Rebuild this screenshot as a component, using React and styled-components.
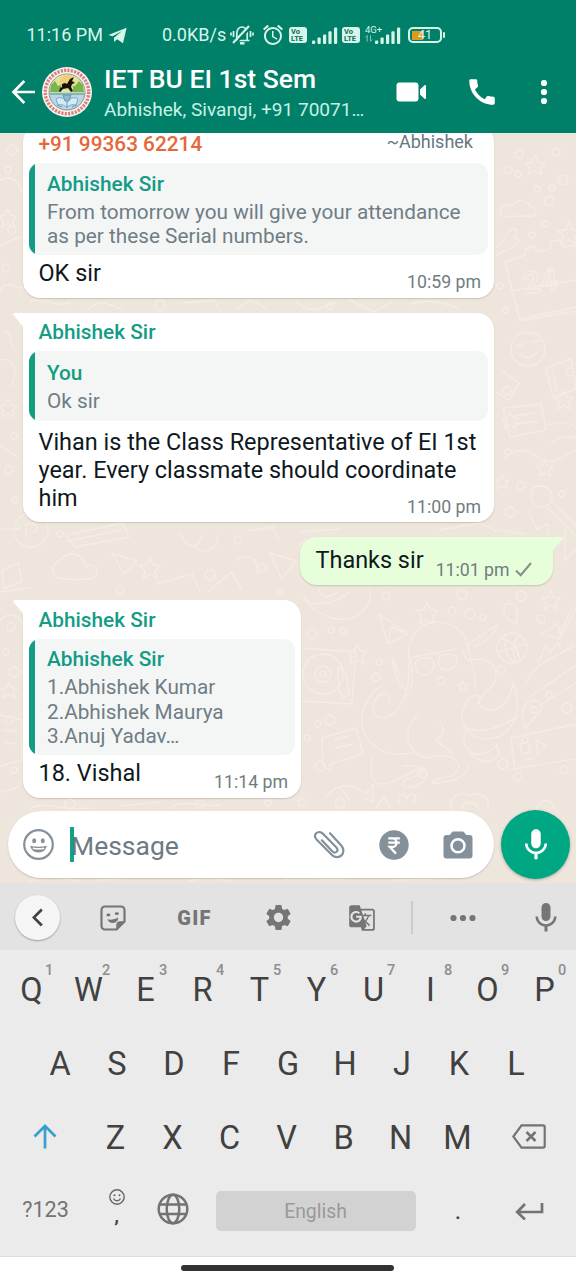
import React from 'react';
import styled, { createGlobalStyle } from 'styled-components';
import { MdAlarm, MdCall, MdGTranslate, MdMic, MdSettings } from 'react-icons/md';

const GlobalStyle = createGlobalStyle`
  * { box-sizing: border-box; }
  html, body { margin: 0; padding: 0; }
  body { font-family: Roboto, "Noto Sans", sans-serif; }
  svg { display: block; flex: none; }
`;

const Screen = styled.div`
  width: 576px;
  height: 1280px;
  display: flex;
  flex-direction: column;
  overflow: hidden;
  background: #fff;
`;

/* ---------- header ---------- */

const Header = styled.header`
  height: 133px;
  flex: none;
  background: #018069;
  color: #fff;
`;

const StatusBar = styled.div`
  height: 59px;
  padding: 11px 0 0 26.5px;
  display: flex;
  align-items: center;
  color: #d8f5ea;
`;

const StatusText = styled.span`
  width: ${(p) => p.$width}px;
  margin-left: ${(p) => p.$gap || 0}px;
  font-size: 18px;
  line-height: 24px;
  white-space: nowrap;
`;

const StatusSlot = styled.span`
  margin-left: ${(p) => p.$gap}px;
  display: flex;
`;

const VolteBadge = styled.span`
  width: 18px;
  height: 16px;
  margin-left: ${(p) => p.$gap}px;
  padding-left: 2px;
  border-radius: 3px;
  background: #d8f5ea;
  color: #05705c;
  display: flex;
  flex-direction: column;
  justify-content: center;
  font-size: 7.5px;
  font-weight: 700;
  line-height: 7px;
`;

const NetworkLabel = styled.span`
  width: 20px;
  height: 20px;
  margin: -2px -10px 0 5px;
  font-size: 9.5px;
  line-height: 11px;
`;

const Battery = styled.span`
  width: 34px;
  height: 16px;
  margin-left: 7px;
  padding: 1.5px 0;
  border: 2px solid #d8f5ea;
  border-radius: 5px;
  font-size: 12.5px;
  line-height: 12px;
  background: linear-gradient(90deg, transparent 2px, #dd9a1c 2px 13px, transparent 13px) content-box;
  display: flex;
  align-items: center;
  justify-content: center;
`;

const BatteryTip = styled.span`
  width: 2px;
  height: 6px;
  margin-left: 1px;
  border-radius: 1px;
  background: #d8f5ea;
`;

const AppBar = styled.div`
  height: 74px;
  padding: 0 27px 9px 11px;
  display: flex;
  align-items: center;
`;

const TitleBlock = styled.div`
  width: 280px;
  margin: 0 12px 0 12px;
  padding-top: 5px;
  white-space: nowrap;
`;

const Title = styled.div`
  font-size: 26.5px;
  line-height: 31px;
  font-weight: 500;
`;

const Subtitle = styled.div`
  font-size: 19.1px;
  line-height: 31px;
  color: #c6f2e4;
`;

/* ---------- chat ---------- */

const Chat = styled.main`
  position: relative;
  height: 750px;
  flex: none;
  overflow: hidden;
  background: #eee5dc;
  isolation: isolate;
`;

const WallpaperLayer = styled.div`
  position: absolute;
  inset: 0;
  z-index: -1;
`;

const Thread = styled.div`
  height: 678px;
  margin-top: -8.5px;
  padding: 0 23px;
  display: flex;
  flex-direction: column;
  align-items: flex-start;
`;

const Bubble = styled.article`
  position: relative;
  flex: none;
  width: ${(p) => p.$width}px;
  height: ${(p) => p.$height}px;
  margin-bottom: 15px;
  padding: 9.5px 6px 0;
  display: flex;
  flex-direction: column;
  background: #fff;
  border-radius: ${(p) => (p.$tail ? '0 17px 17px 17px' : '17px')};
  box-shadow: 0 1px 1.5px rgba(90, 75, 55, 0.22);
`;

const SentBubble = styled(Bubble)`
  align-self: flex-end;
  flex-direction: row;
  padding: 9px 18px 0 15.5px;
  background: #e6ffda;
  border-radius: 17px 0 17px 17px;
`;

const Tail = styled.svg`
  position: absolute;
  top: 0;
  ${(p) => (p.$side === 'left' ? 'left: -10px;' : 'right: -10px;')}
`;

const NameRow = styled.div`
  height: 29px;
  padding: 0 15px 0 9.5px;
  display: flex;
  justify-content: space-between;
  font-size: 20.8px;
  line-height: 20px;
  font-weight: 500;
  color: ${(p) => p.$color || '#159c85'};
`;

const PushName = styled.span`
  margin-top: -2.5px;
  font-size: 18px;
  font-weight: 400;
  color: #667781;
`;

const Quote = styled.blockquote`
  margin: 0;
  padding: ${(p) => (p.$roomy ? '10px 8px 7px 18px' : '8.5px 8px 6px 18px')};
  border-radius: 11px;
  background: linear-gradient(90deg, ${(p) => p.$accent} 6px, #f4f6f6 6px);
  color: #6f7d85;
  font-size: 20.75px;
  line-height: 24.5px;
`;

const QuoteName = styled.div`
  margin-bottom: 4px;
  font-size: 20.8px;
  line-height: 24px;
  font-weight: 500;
  color: ${(p) => p.$color};
`;

const Line = styled.div`
  white-space: nowrap;
`;

const Body = styled.div`
  margin-top: ${(p) => p.$gap}px;
  padding-left: ${(p) => (p.$flush ? 0 : 9.5)}px;
  font-size: 23.45px;
  line-height: 28px;
  color: #0f181d;
`;

const Time = styled.time`
  align-self: flex-end;
  display: flex;
  align-items: center;
  gap: 5px;
  margin: -14.5px 7px 0 0;
  font-size: 17.7px;
  line-height: 20px;
  color: #6f7d80;
  white-space: nowrap;
`;

const SentTime = styled(Time)`
  margin: 0 0 5.5px 12px;
`;

/* ---------- composer ---------- */

const Composer = styled.div`
  height: 69px;
  margin-top: 7.5px;
  padding: 0 6px 0 8px;
  display: flex;
  align-items: center;
  justify-content: space-between;
`;

const InputPill = styled.div`
  width: 486px;
  height: 67px;
  padding: 0 20px 0 15px;
  border-radius: 34px;
  background: #fff;
  box-shadow: 0 1px 1.5px rgba(90, 75, 55, 0.25);
  display: flex;
  align-items: center;
`;

const Cursor = styled.span`
  width: 4px;
  height: 35px;
  margin: 0 -3px 0 16px;
  background: #14a284;
`;

const Placeholder = styled.span`
  width: 241.5px;
  padding-top: 2px;
  font-size: 26.5px;
  line-height: 34px;
  color: #6d7a81;
`;

const PillIcon = styled.span`
  margin-right: ${(p) => p.$gap || 0}px;
`;

const VoiceButton = styled.button`
  width: 69px;
  height: 69px;
  padding: 0;
  border: 0;
  border-radius: 50%;
  background: #00a783;
  box-shadow: 0 1px 3px rgba(40, 60, 50, 0.35);
  display: grid;
  place-items: center;
`;

/* ---------- keyboard ---------- */

const KeyToolbar = styled.div`
  height: 67px;
  flex: none;
  padding: 2px 12px 0 15px;
  display: grid;
  grid-template-columns: 45px 105px 59px 109px 57px 43px 60px 71px;
  align-items: center;
  justify-items: center;
  background: #e3e3e3;
  color: #757575;
`;

const DictateSlot = styled.span`
  justify-self: end;
`;

const RoundButton = styled.span`
  width: 45px;
  height: 45px;
  border-radius: 50%;
  background: #f5f5f5;
  box-shadow: 0 1px 2px rgba(0, 0, 0, 0.3);
  display: grid;
  place-items: center;
`;

const GifLabel = styled.span`
  font-size: 20px;
  line-height: 24px;
  font-weight: 900;
  letter-spacing: 1.3px;
`;

const Divider = styled.span`
  width: 2px;
  height: 33px;
  background: #cbcbcb;
`;

const Keys = styled.div`
  height: 307px;
  flex: none;
  padding-top: 3.5px;
  background: #ebebeb;
  border-bottom: 1px solid #dedede;
  color: #414141;
`;

const KeyRow = styled.div`
  height: 73.8px;
  padding: 0 ${(p) => p.$inset}px;
  display: grid;
  grid-template-columns: ${(p) => p.$cols};
`;

const Key = styled.span`
  position: relative;
  display: grid;
  place-items: center;
  padding-bottom: ${(p) => p.$lift || 0}px;
  font-size: 32.5px;
  line-height: 38px;
`;

const KeyHint = styled.sup`
  position: absolute;
  top: 8.5px;
  left: 42px;
  font-size: 14.5px;
  line-height: 18px;
  font-weight: 500;
  color: #8d8d8d;
`;

const SymbolsKey = styled(Key)`
  padding-bottom: 3px;
  font-size: 21.6px;
  color: #737373;
`;

const CommaKey = styled(Key)`
  display: flex;
  flex-direction: column;
  align-items: center;
  padding-top: 14px;
`;

const Punct = styled.span`
  margin-top: ${(p) => p.$top || 0}px;
  font-size: 21px;
  line-height: 22px;
  font-weight: 500;
`;

const SpaceKey = styled.span`
  height: 40px;
  margin: 16.5px 0 0;
  border-radius: 5px;
  background: #d2d2d2;
  color: #999;
  font-size: 19.4px;
  line-height: 41px;
  text-align: center;
`;

const NavBar = styled.footer`
  height: 23px;
  flex: none;
  display: flex;
  justify-content: center;
  padding: 8px 1px 0 0;
  background: #fff;
`;

const HomePill = styled.span`
  width: 213px;
  height: 6px;
  border-radius: 3px;
  background: #323232;
`;

/* ---------- drawings ---------- */

const PlaneIcon = () => (
  <svg width="19" height="17" viewBox="0 0 19 17" fill="currentColor">
    <path d="M18.600.800L15 16.300 9.200 12.300 6 15V10.700L14 4 4.600 9.300.400 7.900z" />
  </svg>
);

const SilentBell = () => (
  <svg width="24" height="22" viewBox="0 0 24 22" fill="none" stroke="currentColor" strokeWidth="1.700">
    <path d="M4.500 16.500h15M6.800 16V9a5.200 6 0 0 1 10.400 0V16" />
    <path d="M10 19.300h4.500" strokeWidth="2.400" />
    <path d="M4.500 20.500L20.500 3.500" stroke="#018069" strokeWidth="2" />
    <path d="M3 19L19 2" strokeWidth="2" />
    <path d="M3.500 7v6M1 8.500v3M20.500 7v6M23 8.500v3" />
  </svg>
);

const Signal = () => (
  <svg width="26" height="17" viewBox="0 0 26 17" fill="currentColor">
    <rect x="0" y="13.500" width="3.200" height="3.500" rx="1" />
    <rect x="5.500" y="10.500" width="3.200" height="6.500" rx="1" />
    <rect x="11" y="7.500" width="3.200" height="9.500" rx="1" />
    <rect x="16.400" y="4.200" width="3.200" height="12.800" rx="1" />
    <rect x="22" y="0.500" width="3.200" height="16.500" rx="1" />
  </svg>
);

const DataArrows = () => (
  <svg width="8" height="7" viewBox="0 0 8 7" fill="none" stroke="currentColor" strokeWidth="1" opacity="0.6">
    <path d="M2.200 6.500v-6L.600 2.400M5.500.300v6l1.700-1.900" />
  </svg>
);

const BackArrow = () => (
  <svg width="25" height="26" viewBox="0 0 25 26" fill="none" stroke="#fff" strokeWidth="2.700">
    <path d="M24 13H3M13.300 2L2.500 13l10.800 11" />
  </svg>
);

const AvatarFrame = styled.svg`
  margin-left: 6px;
`;

const GroupAvatar = () => (
  <AvatarFrame width="50" height="50" viewBox="0 0 50 50">
    <circle cx="25" cy="25" r="25" fill="#f9f1ee" />
    <circle cx="25" cy="25" r="21.700" fill="none" stroke="#d8807c" strokeWidth="3.400" strokeDasharray="2.200 1.200" />
    <circle cx="25" cy="25" r="18" fill="#b9d7e6" stroke="#6b6f62" strokeWidth="0.700" />
    <path d="M7.500 25a17.500 17.500 0 0 1 35 0z" fill="#e3e39c" />
    <circle cx="25" cy="15" r="7.500" fill="#f1cf78" />
    <path d="M9 18l4-4 3 5 3-1v7H8zM41 18l-4-4-4 5-2 0v6h11z" fill="#7ab54c" />
    <path d="M17 22l3-2v-3l3-1 2 1 3-5 4-2-2 4 3 2-3 1-1 3 2 4-2 1-3-4-5 1-3 3-1-1 2-4z" fill="#16130f" />
    <path d="M8 26h34v2H8z" fill="#8fb5a0" />
    <path d="M14 32c4-3 7 0 11 1 4-1 7-4 11-1l-2 6c-3-1-6 0-9 2-3-2-6-3-9-2z" fill="#d6eaf3" stroke="#7aaac8" />
    <path d="M21 28h8l-2 6h-4zM25 34v7M15 38l5 2M35 38l-5 2" fill="#8fbad2" stroke="#5f95b8" strokeWidth="0.900" />
  </AvatarFrame>
);

const VideoIcon = () => (
  <svg width="31" height="20" viewBox="0 0 31 20" fill="#fff">
    <rect x="0.500" y="0.500" width="22" height="19" rx="3" />
    <path d="M24 7.500L28.500 3.300c.700-.600 1.500-.300 1.500.600v12.200c0 .900-.800 1.200-1.500.600L24 12.500z" />
  </svg>
);

const Kebab = () => (
  <svg width="8" height="26" viewBox="0 0 8 26" fill="#fff">
    <circle cx="4" cy="4" r="3.100" />
    <circle cx="4" cy="13" r="3.100" />
    <circle cx="4" cy="22" r="3.100" />
  </svg>
);

const BubbleTail = ({ side, fill }) => (
  <Tail $side={side} width="11" height="17" viewBox="0 0 11 17">
    <path
      d="M1.500 0H11v17L10 13.500L.900 2.600C-.200 1.300.200 0 1.500 0z"
      fill={fill}
      transform={side === 'right' ? 'translate(11 0) scale(-1 1)' : undefined}
    />
  </Tail>
);

const SentTick = () => (
  <svg width="17" height="15" viewBox="0 0 17 15" fill="none" stroke="#84938a" strokeWidth="2.100">
    <path d="M1 8.500l4.700 4.700L16 1" />
  </svg>
);

const EmojiIcon = () => (
  <svg width="31" height="31" viewBox="0 0 31 31" fill="#84919a">
    <circle cx="15.500" cy="15.500" r="14.300" fill="none" stroke="#84919a" strokeWidth="2.200" />
    <ellipse cx="11.200" cy="11.700" rx="2" ry="2.500" />
    <ellipse cx="19.800" cy="11.700" rx="2" ry="2.500" />
    <path d="M7.300 16.800c5 1.300 11.400 1.300 16.400 0-.600 4.300-4 6.700-8.200 6.700s-7.600-2.400-8.200-6.700z" />
    <path d="M9.800 19.300c3.800.700 7.600.700 11.400 0" stroke="#fff" strokeWidth="1.500" fill="none" />
  </svg>
);

const ClipIcon = () => (
  <svg width="32" height="30" viewBox="0 0 32 30" fill="none" stroke="#84919a" strokeWidth="2.200" strokeLinecap="round">
    <path d="M17 3.200l11.300 12.300c2.800 3.200 2.700 7.400.200 9.900-2.700 2.600-6.900 2.300-9.800-.700L3.800 9.700C1.700 7.500 1.500 4.900 3.200 3.200 5 1.500 7.800 1.500 10 3.800l13.200 13.500c1.500 1.600 1.600 3.400.500 4.500-1.200 1.100-3 .9-4.500-.600L8.900 10.300" />
  </svg>
);

const RupeeIcon = () => (
  <svg width="30" height="30" viewBox="0 0 30 30" fill="none">
    <circle cx="15" cy="15" r="14.700" fill="#84919a" />
    <path d="M9.300 8.300h11.500M9.300 12.700h11.500M10 8.300h3.300c5.500 0 5.500 8.700 0 8.700h-2.500l6.200 6.600" stroke="#fff" strokeWidth="2.300" />
  </svg>
);

const CameraIcon = () => (
  <svg width="30" height="28" viewBox="0 0 30 28">
    <path d="M10.700.500h8.600c1 0 1.500.400 2.200 1.200L23.300 4h3.200A3 3 0 0 1 29.500 7v17.500a3 3 0 0 1-3 3h-23a3 3 0 0 1-3-3V7a3 3 0 0 1 3-3h3.200L8.500 1.700C9.200.900 9.700.500 10.700.500z" fill="#84919a" />
    <circle cx="15" cy="14.800" r="6.500" fill="#84919a" stroke="#fff" strokeWidth="2.500" />
  </svg>
);

const ChevronIcon = () => (
  <svg width="12" height="19" viewBox="0 0 12 19" fill="none" stroke="#424242" strokeWidth="2.700">
    <path d="M9.800 1.500L1.800 9.500l8 8" />
  </svg>
);

const StickerIcon = () => (
  <svg width="26" height="26" viewBox="0 0 26 26" fill="none" stroke="currentColor" strokeWidth="2.200">
    <path d="M16.500 24.500H5A3.500 3.500 0 0 1 1.500 21V5A3.500 3.500 0 0 1 5 1.500h16A3.500 3.500 0 0 1 24.500 5v11.500z" />
    <path d="M16.800 24.500v-5a2.700 2.700 0 0 1 2.700-2.700h5z" fill="currentColor" strokeWidth="1" />
    <ellipse cx="8.400" cy="10" rx="2" ry="1.400" fill="currentColor" stroke="none" />
    <ellipse cx="16.800" cy="8.700" rx="2" ry="1.400" fill="currentColor" stroke="none" />
    <path d="M7.300 14.300c3.700.900 7.500.200 10.800-1.800.300 3-1.600 5-4.600 5.500-2.700.400-5.200-1-6.200-3.700z" fill="currentColor" stroke="none" />
  </svg>
);

const MoreDots = () => (
  <svg width="26" height="8" viewBox="0 0 26 8" fill="currentColor">
    <circle cx="3.500" cy="4" r="3.100" />
    <circle cx="13" cy="4" r="3.100" />
    <circle cx="22.500" cy="4" r="3.100" />
  </svg>
);

const ShiftIcon = () => (
  <svg width="24" height="25" viewBox="0 0 24 25" fill="none" stroke="#369fd0" strokeWidth="2.700">
    <path d="M12 24.500V2.500M1.500 12.500L12 2l10.500 10.500" />
  </svg>
);

const BackspaceIcon = () => (
  <svg width="34" height="25" viewBox="0 0 34 25" fill="none" stroke="#737373" strokeWidth="2.200">
    <path d="M9.500 1.300h21.500c1 0 1.700.700 1.700 1.700v19c0 1-.700 1.700-1.700 1.700H9.500L1.300 12.500z" />
    <path d="M14.500 8l9 9M23.500 8l-9 9" strokeWidth="2.500" />
  </svg>
);

const SmileIcon = () => (
  <svg width="16" height="16" viewBox="0 0 16 16" fill="none" stroke="#666" strokeWidth="1.400">
    <circle cx="8" cy="8" r="7.200" />
    <path d="M4.500 9.500c1.500 3 5.500 3 7 0" />
    <circle cx="5.500" cy="6.300" r="1" fill="#666" stroke="none" />
    <circle cx="10.500" cy="6.300" r="1" fill="#666" stroke="none" />
  </svg>
);

const GlobeIcon = () => (
  <svg width="32" height="32" viewBox="0 0 32 32" fill="none" stroke="#737373" strokeWidth="2.500">
    <circle cx="16" cy="16" r="14.300" />
    <ellipse cx="16" cy="16" rx="6.300" ry="14.300" />
    <path d="M3 11.500h26M3 21h26" />
  </svg>
);

const EnterIcon = () => (
  <svg width="29" height="17" viewBox="0 0 29 17" fill="none" stroke="#737373" strokeWidth="2.700">
    <path d="M27 0v9H2.500M10 1L2.200 9l7.800 7.500" />
  </svg>
);

/* Small repeated doodle shapes: [x, y, radius] and [x, y, size] */
const DOTS = [
  [519, 154, 4], [556, 152, 4], [508, 170, 4], [518, 174, 3], [563, 180, 5], [537, 189, 3], [552, 188, 3], [549, 201, 5], [545, 224, 3], [532, 235, 3],
  [500, 286, 3], [505, 310, 3], [507, 391, 4], [570, 372, 4], [508, 452, 3], [521, 486, 4], [510, 512, 5], [562, 494, 3],
  [386, 596, 4], [462, 595, 5], [521, 596, 5], [541, 619, 4], [452, 611, 4], [470, 614, 5], [483, 617, 3], [331, 630, 3], [343, 631, 3], [312, 634, 5],
  [379, 662, 3], [376, 677, 4], [441, 681, 4], [501, 670, 4], [567, 708, 5], [549, 695, 3], [330, 720, 5], [318, 724, 3], [320, 766, 5], [422, 774, 4],
  [503, 764, 5], [518, 777, 4], [525, 740, 3], [307, 738, 3], [564, 770, 4], [302, 802, 4], [12, 150, 5], [8, 170, 3], [12, 230, 4], [6, 268, 4],
  [14, 436, 3], [9, 470, 4], [15, 500, 3], [11, 627, 4], [6, 652, 3], [14, 672, 5], [9, 720, 4], [14, 770, 3], [160, 305, 5], [330, 306, 3],
  [60, 534, 3], [238, 540, 4], [120, 590, 4], [210, 575, 5], [262, 568, 4], [340, 803, 5], [200, 804, 4], [70, 804, 5], [268, 803, 3], [280, 592, 3],
];

const STARS = [
  [535, 165, 10], [569, 233, 11], [427, 613, 11], [357, 654, 10], [551, 600, 9], [8, 218, 9], [8, 408, 9], [510, 420, 8], [502, 482, 7], [9, 690, 8],
  [150, 568, 10], [545, 468, 8], [564, 400, 9], [305, 545, 6], [463, 686, 5],
];

const starPath = (x, y, s) =>
  `M${x} ${y - s}l${s * 0.3} ${s * 0.7}l${s * 0.7} ${s * 0.1}l${-s * 0.5} ${s * 0.5}l${s * 0.2} ${s * 0.7}l${-s * 0.7} ${-s * 0.4}l${-s * 0.7} ${s * 0.4}l${s * 0.2} ${-s * 0.7}l${-s * 0.5} ${-s * 0.5}l${s * 0.7} ${-s * 0.1}z`;

const Wallpaper = () => (
  <svg width="576" height="750" viewBox="0 133 576 750" fill="none" stroke="#f5ede5" strokeWidth="1.400" strokeLinecap="round" strokeLinejoin="round">
    {DOTS.map(([x, y, r]) => <circle key={`${x}-${y}`} cx={x} cy={y} r={r} />)}
    {STARS.map(([x, y, s]) => <path key={`${x}-${y}`} d={starPath(x, y, s)} />)}
    {/* cloud, fist, calendar */}
    <path d="M501 214c-4-8 6-12 11-8 5-8 16-6 18 1 7-2 8 8 2 9-9 1-17-1-25 1-3 0-6-1-6-3z" />
    <path d="M497 247c8-6 9-14 14-18 6-2 7 5 3 9 6-2 6 6 1 7-6 6-13 5-18 10" />
    <path d="M505 262l20-7 1-6 8-3 4 6 12-3 2-8 8-1 3 7 13-2 6 65-62 11zM511 291l65-11M520 319l56-12" />
    <text x="523" y="292" fontFamily="Roboto, sans-serif" fontSize="31" fontWeight="700" transform="rotate(-8 540 285)">24</text>
    {/* smiley, mug and cat along the right edge */}
    <circle cx="528" cy="349" r="17" />
    <path d="M516 347l8-4M532 342l8-2M519 354c7 6 14 4 18-2" />
    <path d="M546 368l25-9 5 30-23 8zM553 371l4 20M501 370l18 13-10 17-14-8M503 408l38-4 5 26-36 7zM514 416l20-3M516 424l22-3" />
    <path d="M505 458c12-12 24-8 34 0s20 2 37-8M548 425c10-4 20-3 28 2M552 442c8-5 14-6 24-4" />
    <path d="M532 489c8-6 20-2 20 8s-14 14-19 5c-2-5-2-9-1-13zM552 502l24 24M548 508l26 26M530 514l7 15 10-5 2 12" />
    {/* left edge */}
    <path d="M0 180c12-6 20 2 22 14M0 245l20-8M0 290c10-14 18 4 23-4M3 330c12 4 4 14 12 20M0 360c14-4 20 14 10 26M0 445l18 12M0 530c8-4 12 2 20-2M2 570l16-7 4 18-18 8zM0 620c8-8 20-6 22 4M0 715l22 5v40L0 766M3 730l14 2M3 742l14 2M0 792l20-5" />
    {/* strip above the second message */}
    <path d="M30 302c14-8 24 8 40 0M88 310c12-12 22-6 34 0M183 303l32-3 4 10M236 310l14-10 16 8M296 302c16 14 26 4 40 0M350 300l24 12 18-10M410 304c16-5 30-3 48 4" />
    {/* strip around the sent message */}
    <circle cx="31" cy="530" r="17" />
    <path d="M26 536v-12h6c7 0 7 8 0 8M66 535l57-12 6 14-54 10zM68 541l53-11M180 532c5 18 18 18 22 4M196 548c10 8 23 0 22-13M248 531l25-4 6 14M300 532l40-3M440 530l40-7 16 8M500 530l24 4M565 530v30l11-10" />
    <path d="M60 560c10-10 23-6 26 6 11-4 15 8 7 12-13 3-23 2-35 0-8-4-6-14 2-18zM112 553l25 8-13 13zM156 584l36-10 8 17M208 592l23-20 11 17M237 560c12-8 23 0 20 14M0 592l30-4M270 553l26 8-14 18z" />
    <path d="M304 595c8 24 52 36 64 8 3-5 3-12 2-14M305 600c12 8 34 2 44-8M320 588c-3 8 8 12 18 4" />
    {/* paper plane, record player */}
    <path d="M379 614l29 20-20 10zM388 644l3-17 17 7M300 648l56 4-4 52-52-3" />
    <circle cx="323" cy="674" r="20" />
    <circle cx="323" cy="674" r="8" />
    <circle cx="323" cy="674" r="3" />
    <path d="M338 667l8 6 3 22-6 3-4-8z" />
    {/* octopus */}
    <path d="M409 660c-6-48 54-50 60-10 3 20 8 28 6 38M409 655c6 18 4 34-3 42M414 657l42-8M416 662c2-4 14-6 17-2s0 14-8 15-11-8-9-13zM439 658c2-4 14-5 17-1s0 12-8 13-11-6-9-12z" />
    <path d="M409 662c2 26-8 52-24 56-14 2-16-18-4-24 4-2 10 2 8 8M406 689c-10-2-11-20-14-30M392 659c4 2 5 12 8 18M382 685c-24 16-30 50-1 65 10 6 22 4 32 3M417 715c-16 18-10 38 10 43M440 722c6 8 3 14-4 18 6 6 14 10 16 14" />
    <path d="M468 660c25-4 36 12 22 28-10 8-14 16-7 20 11 6 26-2 30-25 10 28 2 52-24 56-22 2-36-22-20-40 7-7 14-3 9 4" />
    <path d="M373 755c-6 26 4 33 18 27l30-14c4 7-8 9-14 11-9 5-4 12 10 7 18-10 12-22-14-20M427 758c32-10 42 14 20 19-14 2-20 8-10 6 24-2 34-12 30-20M466 728c-10 28 20 34 31 16l2 10c-6 12-22 8-29-2" />
    <path d="M467 645l30-20c-1 10-14 18-23 22M462 650l5 10M463 725c8 10 32 6 54-8" />
    {/* basketball and drops */}
    <circle cx="512" cy="648" r="15" />
    <path d="M500 639c12 0 18 10 20 22M506 634c-2 12-2 20 8 28M498 652l28-8M519 635c-6 8-8 18-2 27" />
    <path d="M506 604c8-2 14 5 10 20-9-4-16-12-10-20zM528 702c11-6 18 4 10 12-5 5-11 10-12 16-3-8-7-18 2-28z" />
    <circle cx="534" cy="710" r="3" />
    <path d="M525 685c10-22 20-22 51-40M530 697l46-32M540 705l36-22M538 663l8-18 4 8 8-10 5 9 10-9M541 635l17-12 2 12 12-28M548 635l12 4 16-30" />
    {/* envelope, cash, fish and rose */}
    <path d="M322 738l34-10 7 26-32 10-1 6-7-4zM334 740l14-4M336 748l18-4M511 738l65-14M512 769l64-10M511 738l4 32M536 740l10 6-8 8zM520 744l8-2 2 10-8 2zM524 760l10-2" />
    <path d="M327 796c12-16 28-10 39-2l7-10v18l-8-4M340 788l10 12M452 810c-6-10 8-22 18-14 6-4 20-2 18 12M462 810c0-10 16-10 16 0M400 803c-6-8 5-14 7-4 2-10 14-4 6 4M536 810c6-14 17-10 18-2M376 808l8-12 6 12" />
    {/* strip below the composer */}
    <path d="M30 808c20-8 30 4 60 0M120 806l40-4M170 808c14-10 30 0 50-3M30 881c12-6 30-4 48 0M98 880l40-3M190 881c18-5 24-3 40 0M286 879c20-5 40 4 70-2M395 880l50-2" />
  </svg>
);

const TOP = [...'QWERTYUIOP'];
const MIDDLE = [...'ASDFGHJKL'];
const LOWER = [...'ZXCVBNM'];

const TEAL = '#139b86';

export default function App() {
  return (
    <Screen>
      <GlobalStyle />
      <Header>
        <StatusBar>
          <StatusText $width={77}>11:16 PM</StatusText>
          <StatusSlot $gap={4}><PlaneIcon /></StatusSlot>
          <StatusText $width={64} $gap={35.5}>0.0KB/s</StatusText>
          <StatusSlot $gap={4}><SilentBell /></StatusSlot>
          <StatusSlot $gap={7}><MdAlarm size={24} /></StatusSlot>
          <VolteBadge $gap={4}><span>Vo</span><span>LTE</span></VolteBadge>
          <StatusSlot $gap={5}><Signal /></StatusSlot>
          <VolteBadge $gap={4}><span>Vo</span><span>LTE</span></VolteBadge>
          <NetworkLabel>4G+<DataArrows /></NetworkLabel>
          <StatusSlot $gap={0}><Signal /></StatusSlot>
          <Battery>41</Battery>
          <BatteryTip />
        </StatusBar>
        <AppBar>
          <BackArrow />
          <GroupAvatar />
          <TitleBlock>
            <Title>IET BU EI 1st Sem</Title>
            <Subtitle>Abhishek, Sivangi, +91 70071…</Subtitle>
          </TitleBlock>
          <VideoIcon />
          <StatusSlot $gap={37.5}><MdCall size={34} color="#fff" /></StatusSlot>
          <StatusSlot $gap={41}><Kebab /></StatusSlot>
        </AppBar>
      </Header>

      <Chat>
        <WallpaperLayer><Wallpaper /></WallpaperLayer>
        <Thread>
          <Bubble $width={471} $height={173}>
            <NameRow $color="#e5683a">
              +91 99363 62214
              <PushName>~Abhishek</PushName>
            </NameRow>
            <Quote $accent={TEAL}>
              <QuoteName $color={TEAL}>Abhishek Sir</QuoteName>
              <Line>From tomorrow you will give your attendance</Line>
              <Line>as per these Serial numbers.</Line>
            </Quote>
            <Body $gap={4}>OK sir</Body>
            <Time>10:59 pm</Time>
          </Bubble>

          <Bubble $width={471} $height={209.5} $tail>
            <BubbleTail side="left" fill="#fff" />
            <NameRow>Abhishek Sir</NameRow>
            <Quote $accent="#109e7c" $roomy>
              <QuoteName $color="#109e7c">You</QuoteName>
              <Line>Ok sir</Line>
            </Quote>
            <Body $gap={7}>
              <Line>Vihan is the Class Representative of EI 1st</Line>
              <Line>year. Every classmate should coordinate</Line>
              <Line>him</Line>
            </Body>
            <Time>11:00 pm</Time>
          </Bubble>

          <SentBubble $width={253} $height={48}>
            <BubbleTail side="right" fill="#e6ffda" />
            <Body as="span" $gap={0} $flush>Thanks sir</Body>
            <SentTime>11:01 pm <SentTick /></SentTime>
          </SentBubble>

          <Bubble $width={278} $height={198} $tail>
            <BubbleTail side="left" fill="#fff" />
            <NameRow>Abhishek Sir</NameRow>
            <Quote $accent={TEAL}>
              <QuoteName $color={TEAL}>Abhishek Sir</QuoteName>
              <Line>1.Abhishek Kumar</Line>
              <Line>2.Abhishek Maurya</Line>
              <Line>3.Anuj Yadav…</Line>
            </Quote>
            <Body $gap={4}>18. Vishal</Body>
            <Time>11:14 pm</Time>
          </Bubble>
        </Thread>

        <Composer>
          <InputPill>
            <EmojiIcon />
            <Cursor />
            <Placeholder>Message</Placeholder>
            <PillIcon $gap={34}><ClipIcon /></PillIcon>
            <PillIcon $gap={34}><RupeeIcon /></PillIcon>
            <PillIcon><CameraIcon /></PillIcon>
          </InputPill>
          <VoiceButton aria-label="Record voice message"><MdMic size={38} color="#fff" /></VoiceButton>
        </Composer>
      </Chat>

      <KeyToolbar>
        <RoundButton><ChevronIcon /></RoundButton>
        <StickerIcon />
        <GifLabel>GIF</GifLabel>
        <MdSettings size={31} />
        <MdGTranslate size={28} />
        <Divider />
        <MoreDots />
        <DictateSlot><MdMic size={36} /></DictateSlot>
      </KeyToolbar>

      <Keys>
        <KeyRow $inset={3} $cols="repeat(10, 57px)">
          {TOP.map((k, i) => (
            <Key key={k}>{k}<KeyHint>{(i + 1) % 10}</KeyHint></Key>
          ))}
        </KeyRow>
        <KeyRow $inset={31.5} $cols="repeat(9, 57px)">
          {MIDDLE.map((k) => <Key key={k}>{k}</Key>)}
        </KeyRow>
        <KeyRow $inset={3} $cols="84px repeat(7, 57px) 86px">
          <Key $lift={3}><ShiftIcon /></Key>
          {LOWER.map((k) => <Key key={k}>{k}</Key>)}
          <Key $lift={3}><BackspaceIcon /></Key>
        </KeyRow>
        <KeyRow $inset={3} $cols="85px 57px 56px 14.500px 200px 85px 57px">
          <SymbolsKey>?123</SymbolsKey>
          <CommaKey><SmileIcon /><Punct $top={-1}>,</Punct></CommaKey>
          <Key $lift={6}><GlobeIcon /></Key>
          <span />
          <SpaceKey>English</SpaceKey>
          <Key><Punct>.</Punct></Key>
          <Key><EnterIcon /></Key>
        </KeyRow>
      </Keys>

      <NavBar><HomePill /></NavBar>
    </Screen>
  );
}
